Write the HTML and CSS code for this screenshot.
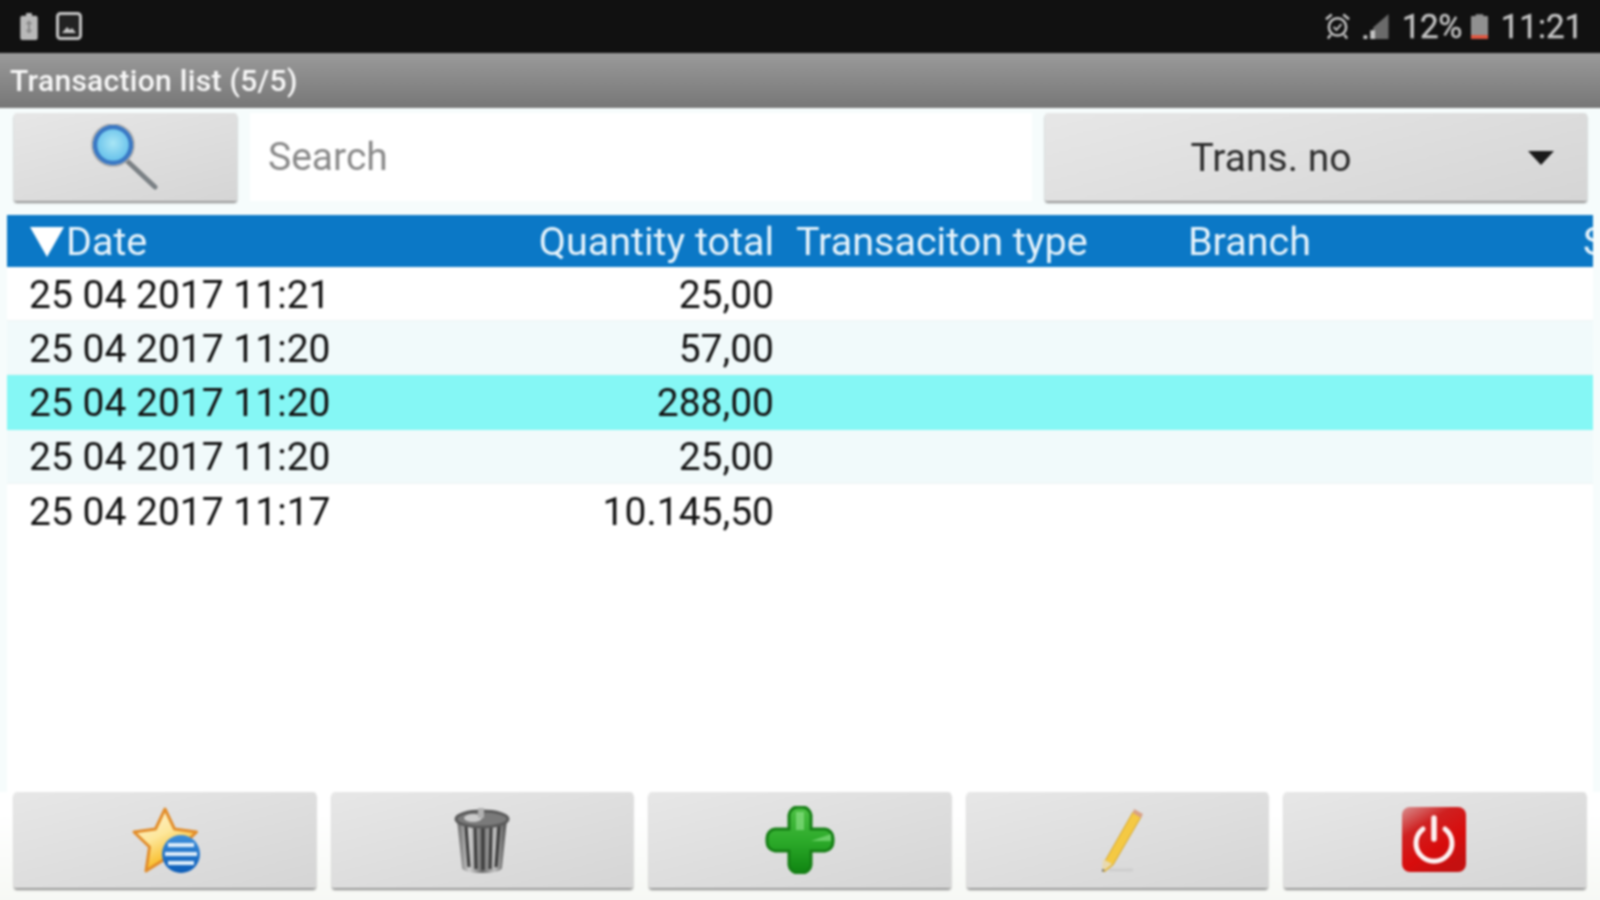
FILE: index.html
```html
<!DOCTYPE html>
<html lang="en">
<head>
<meta charset="utf-8">
<title>Transaction list</title>
<link rel="stylesheet" href="styles.css">
</head>
<body>
<div class="app">
  <header class="status">
    <div class="status-group">
      <svg class="ic-clip" viewBox="0 0 20 30"><path d="M7 1h6v3h4a2 2 0 0 1 2 2v21a2 2 0 0 1-2 2H3a2 2 0 0 1-2-2V6a2 2 0 0 1 2-2h4z" fill="#b9b9b9"/><path d="M10 10v11M7.500 12.500l2.500-2.500 2.500 2.500M7.500 18.500l2.500 2.500 2.500-2.500" stroke="#8a8a8a" stroke-width="2" fill="none"/></svg>
      <svg class="ic-pic" viewBox="0 0 26 28"><rect x="1.500" y="1.500" width="23" height="25" rx="3" fill="#222" stroke="#c4c4c4" stroke-width="3"/><path d="M6 21l5-6 3 3 2-2 4 5z" fill="#c4c4c4"/></svg>
    </div>
    <div class="status-group status-right">
      <svg class="ic-alarm" viewBox="0 0 26 28"><circle cx="13" cy="15" r="9" fill="none" stroke="#c4c4c4" stroke-width="2.600"/><path d="M9 15l3 3 5-6" fill="none" stroke="#c4c4c4" stroke-width="2"/><path d="M1 7l6-5M25 7l-6-5M6 23l-3 4M20 23l3 4" stroke="#c4c4c4" stroke-width="2.600"/></svg>
      <svg class="ic-signal" viewBox="0 0 28 28"><path d="M27 1v26H11V15z" fill="#6a6a6a"/><path d="M1 27h4v-4H1zM8 27h5V18H8z" fill="#c4c4c4"/></svg>
      <span class="status-pct">12%</span>
      <svg class="ic-batt" viewBox="0 0 20 28"><path d="M6 1h8v2h4a1 1 0 0 1 1 1v23H1V4a1 1 0 0 1 1-1h4z" fill="#909090"/><rect x="1" y="23" width="18" height="4" fill="#e2553f"/></svg>
      <span class="status-time">11:21</span>
    </div>
  </header>

  <div class="titlebar">Transaction list (5/5)</div>

  <div class="toolbar">
    <button class="btn btn-search" type="button">
      <svg class="ic-search" viewBox="0 0 70 66">
        <defs><radialGradient id="lens" cx=".5" cy=".45" r=".55"><stop offset="0" stop-color="#a9e6f5"/><stop offset="1" stop-color="#5fbdea"/></radialGradient></defs>
        <path d="M33 34l31 29" stroke="#7a8084" stroke-width="5" stroke-linecap="round"/>
        <circle cx="22" cy="21" r="18" fill="url(#lens)" stroke="#3a78c4" stroke-width="4.500"/>
        <circle cx="22" cy="21" r="21" fill="none" stroke="#a8a8a8" stroke-width="1.500"/>
      </svg>
    </button>
    <div class="search-field">Search</div>
    <button class="btn btn-select" type="button">
      <span class="select-label">Trans. no</span>
      <span class="select-caret"></span>
    </button>
  </div>

  <section class="table">
    <div class="row head">
      <span class="cell date"><i class="sort"></i>Date</span>
      <span class="cell qty">Quantity total</span>
      <span class="cell type">Transaciton type</span>
      <span class="cell branch">Branch</span>
      <span class="cell more">S</span>
    </div>
    <div class="row"><span class="cell date">25 04 2017 11:21</span><span class="cell qty">25,00</span></div>
    <div class="row alt"><span class="cell date">25 04 2017 11:20</span><span class="cell qty">57,00</span></div>
    <div class="row selected"><span class="cell date">25 04 2017 11:20</span><span class="cell qty">288,00</span></div>
    <div class="row alt"><span class="cell date">25 04 2017 11:20</span><span class="cell qty">25,00</span></div>
    <div class="row last"><span class="cell date">25 04 2017 11:17</span><span class="cell qty">10.145,50</span></div>
  </section>

  <footer class="actions">
    <button class="btn" type="button">
      <svg class="ic-action ic-star" viewBox="0 0 70 68">
        <defs>
          <linearGradient id="star" x1="0" y1="0" x2=".5" y2="1"><stop offset="0" stop-color="#fff3d8"/><stop offset=".5" stop-color="#fde79c"/><stop offset="1" stop-color="#f7ae00"/></linearGradient>
          <linearGradient id="disc" x1="0" y1="0" x2="0" y2="1"><stop offset="0" stop-color="#3d90dc"/><stop offset="1" stop-color="#0b5cb8"/></linearGradient>
        </defs>
        <path d="M34 3l9.500 20 22 3-16 15.500 4 22-19.500-10.500L15 65l3.500-24L3 26l21.500-3z" fill="url(#star)" stroke="#e28d2b" stroke-width="3" stroke-linejoin="round"/>
        <circle cx="50" cy="48" r="19" fill="url(#disc)"/>
        <path d="M37 39h26M34 48h32M37 57h26" stroke="#dcecf9" stroke-width="4"/>
      </svg>
    </button>
    <button class="btn" type="button">
      <svg class="ic-action" viewBox="0 0 70 68">
        <defs>
          <linearGradient id="can" x1="0" y1="0" x2="1" y2="0"><stop offset="0" stop-color="#666"/><stop offset=".25" stop-color="#cfcfcf"/><stop offset=".5" stop-color="#6c6c6c"/><stop offset=".75" stop-color="#bdbdbd"/><stop offset="1" stop-color="#4a4a4a"/></linearGradient>
        </defs>
        <path d="M10 13l5 49c0 3 10 5 20 5s20-2 20-5l5-49z" fill="url(#can)"/>
        <path d="M19 20l3 41M28 21l1 42M36 21v43M44 21l-1 42M52 20l-3 41" stroke="#3a3a3a" stroke-width="3"/>
        <ellipse cx="35" cy="13" rx="26" ry="8" fill="#7a7a7a" stroke="#5a5a5a" stroke-width="3"/>
        <ellipse cx="26" cy="12" rx="9" ry="4" fill="#ccc"/>
        <path d="M31 2h6v10h-6z" fill="#b0b0b0"/>
      </svg>
    </button>
    <button class="btn" type="button">
      <svg class="ic-action" viewBox="0 0 70 68">
        <defs><linearGradient id="plus" x1="0" y1="0" x2="0" y2="1"><stop offset="0" stop-color="#4cc044"/><stop offset=".55" stop-color="#2aa828"/><stop offset="1" stop-color="#0f8411"/></linearGradient></defs>
        <path d="M24 9a9 9 0 0 1 9-8h4a9 9 0 0 1 9 8v14h14a9 9 0 0 1 8 9v4a9 9 0 0 1-8 9H46v14a9 9 0 0 1-9 8h-4a9 9 0 0 1-9-8V45H10a9 9 0 0 1-8-9v-4a9 9 0 0 1 8-9h14z" fill="url(#plus)" stroke="#157f15" stroke-width="3"/>
        <path d="M31 6h8v18h-8z" fill="#9be996" opacity=".55"/>
        <path d="M46 35l20-7v7z" fill="#8fe58a" opacity=".6"/>
      </svg>
    </button>
    <button class="btn" type="button">
      <svg class="ic-action" viewBox="0 0 70 68">
        <path d="M50 6l8 5-28 48-9 7 1-11z" fill="#f4c943" stroke="#d6a52a" stroke-width="1"/>
        <path d="M51 3l9 5-2 4-8-5z" fill="#d9a184"/>
        <path d="M20 53l9 5-10 8z" fill="#e8d9b0"/>
        <path d="M19 66l3-2-3-1z" fill="#666"/>
        <path d="M26 64h24" stroke="#bdbdbd" stroke-width="3" opacity=".4"/>
      </svg>
    </button>
    <button class="btn btn-power" type="button">
      <svg class="ic-action" viewBox="0 0 70 68">
        <defs><linearGradient id="pw" x1="0" y1="0" x2=".6" y2="1"><stop offset="0" stop-color="#d89090"/><stop offset=".35" stop-color="#cf2020"/><stop offset=".7" stop-color="#d80c0c"/><stop offset="1" stop-color="#c41010"/></linearGradient></defs>
        <rect x="3" y="1" width="64" height="65" rx="8" fill="url(#pw)"/>
        <path d="M24 23a18 18 0 1 0 22 0" fill="none" stroke="#fdf2f2" stroke-width="5" stroke-linecap="round"/>
        <path d="M35 12v21" stroke="#fdf2f2" stroke-width="5.500" stroke-linecap="round"/>
      </svg>
    </button>
  </footer>
</div>
</body>
</html>
```
FILE: styles.css
```css
* { box-sizing: border-box; }
html, body { margin: 0; height: 100%; overflow: hidden; }
body { background: #fff; }

/* The app bleeds 4px past the window so the soft focus has no fading edge. */
.app {
  width: 1608px;
  height: 908px;
  margin: -4px;
  display: flex;
  flex-direction: column;
  font-family: Roboto, "Liberation Sans", sans-serif;
  background: #f6fcfc;
  overflow: hidden;
  filter: blur(.8px);
}

.status {
  flex: 0 0 57px;
  background: #111;
  display: flex;
  justify-content: space-between;
  align-items: center;
  padding: 4px 21px 1px 23px;
  color: #c4c4c4;
}
.status-group { display: flex; align-items: center; }
.ic-clip { width: 20px; height: 29px; margin-right: 17px; }
.ic-pic { width: 26px; height: 28px; }
.ic-alarm { width: 25px; height: 28px; margin-right: 11px; }
.ic-signal { width: 30px; height: 27px; margin-right: 11px; }
.ic-batt { width: 19px; height: 27px; margin: 0 12px 0 8px; }
.status-pct, .status-time { font-size: 33px; line-height: 1; -webkit-text-stroke: .4px #c4c4c4; }
.status-pct { letter-spacing: -.5px; }

.titlebar {
  flex: 0 0 54px;
  background: linear-gradient(#9a9a9a, #777);
  color: #f8f8f8;
  font-size: 30px;
  font-weight: 500;
  line-height: 55px;
  padding-left: 14px;
  letter-spacing: .3px;
}

.btn {
  border: 0;
  padding: 0;
  border-radius: 3px;
  background: linear-gradient(165deg, #e7e7e7, #d5d5d5);
  box-shadow: 0 2px 2px #8f8f8f;
  display: flex;
  align-items: center;
  justify-content: center;
  font-family: inherit;
}

.toolbar {
  flex: 0 0 107px;
  display: flex;
  gap: 13px;
  padding: 5px 17px 14px 18px;
}
.btn-search { flex: 0 0 223px; }
.ic-search { width: 70px; height: 66px; }
.search-field {
  flex: 0 0 782px;
  background: #fff;
  color: #8a8a8a;
  font-size: 39px;
  line-height: 88px;
  padding-left: 18px;
}
.btn-select {
  flex: 1;
  position: relative;
  color: #2c2c2c;
  font-size: 39px;
}
.select-label { margin-right: 90px; padding-top: 2px; }
.select-caret {
  position: absolute;
  right: 33px;
  top: 38px;
  border-left: 13px solid transparent;
  border-right: 13px solid transparent;
  border-top: 14px solid #1a1a1a;
}

.table {
  flex: 1;
  margin: 0 11px;
  display: flex;
  flex-direction: column;
  overflow: hidden;
  background: #fff;
}
.row {
  flex: 0 0 54.200px;
  display: grid;
  grid-template-columns: 766px 393px 395px 1fr;
  align-items: center;
  color: #111;
  font-size: 39px;
  line-height: 46px;
  padding: 2px 0 0 22px;
  background: #fff;
  border-bottom: 1px solid #eef3f3;
}
.row > .qty { grid-column: 1; grid-row: 1; justify-self: end; margin-right: 21px; }
.row > .date { grid-column: 1; grid-row: 1; display: flex; align-items: center; }
.row > .type { grid-column: 2; grid-row: 1; padding-left: 1px; }
.row > .branch { grid-column: 3; grid-row: 1; }
.row > .more { grid-column: 4; grid-row: 1; }
.alt { background: #f1fafb; }
.selected { background: #85f7f5; border-bottom-color: #85f7f5; }
.last { border-bottom: 0; }
.head {
  flex-basis: 52px;
  padding-top: 2px;
  background: #0b78c6;
  color: #e6f3fb;
  border-bottom: 0;
  font-size: 39.500px;
}
.sort {
  width: 0;
  height: 0;
  border-left: 17px solid transparent;
  border-right: 17px solid transparent;
  border-top: 30px solid #fff;
  margin: 0 2px 0 1px;
}

.actions {
  flex: 0 0 112px;
  display: grid;
  grid-template-columns: repeat(5, 1fr);
  gap: 16px;
  padding: 0 18px 16px 18px;
  background: linear-gradient(#fff 0, #fff 20%, #f6f8f4 100%);
}
.ic-action { width: 70px; height: 68px; }
.ic-star { margin-left: 2px; }
.btn-power .ic-action { margin-left: -2px; }
```
